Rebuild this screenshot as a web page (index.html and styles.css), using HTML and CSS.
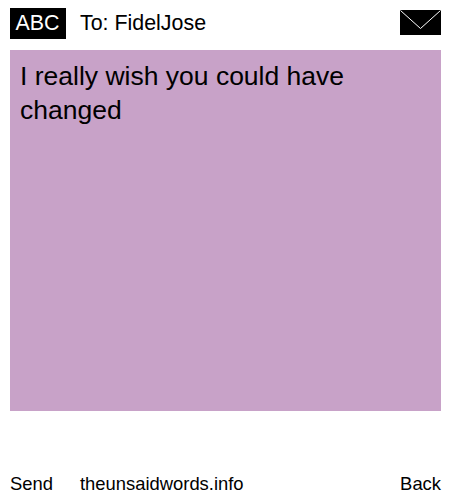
FILE: index.html
```html
<!DOCTYPE html>
<html lang="en">
<head>
    <meta charset="UTF-8">
    <meta name="viewport" content="width=device-width, initial-scale=1.0">
    <title>The Unsaid Words</title>
    <link rel="stylesheet" href="styles.css">
</head>
<body>

    <!-- Header -->
    <div class="header">
        <div class="abc">ABC</div>
        <div class="to">To: FidelJose</div>
        <svg class="envelope" width="41" height="25" viewBox="0 0 41 25">
            <rect width="41" height="25" fill="#000"/>
            <path d="M0.5 0.5 L20.5 18.5 L40.5 0.5" fill="none" stroke="#fff" stroke-width="1"/>
        </svg>
    </div>

    <!-- Message -->
    <div class="message">I really wish you could have changed</div>

    <!-- Footer -->
    <div class="footer">
        <span class="send">Send</span>
        <span class="site">theunsaidwords.info</span>
        <span class="back">Back</span>
    </div>

</body>
</html>
```

FILE: styles.css
```css
body {
    font-family: "Liberation Sans", Arial, sans-serif;
    margin: 0;
    padding: 8px 9px 0 10px;
    background-color: #fff;
    color: #000;
}
.header {
    display: flex;
    align-items: center;
    height: 31px;
}
.abc {
    width: 55px;
    height: 31px;
    padding-right: 1px;
    line-height: 30px;
    text-align: center;
    font-size: 21.4px;
    background-color: #000;
    color: #fff;
}
.to {
    margin-left: 14px;
    font-size: 21.4px;
    flex: 1;
}
.envelope {
    display: block;
    align-self: flex-start;
    margin-top: 2px;
}
.message {
    margin-top: 11px;
    height: 361px;
    box-sizing: border-box;
    padding: 9px 10px;
    font-size: 26.5px;
    line-height: 34px;
    background-color: #c8a2c8;
}
.footer {
    display: flex;
    margin-top: 62px;
    font-size: 18.4px;
    line-height: 22px;
}
.send {
    width: 70px;
}
.site {
    flex: 1;
}
```
